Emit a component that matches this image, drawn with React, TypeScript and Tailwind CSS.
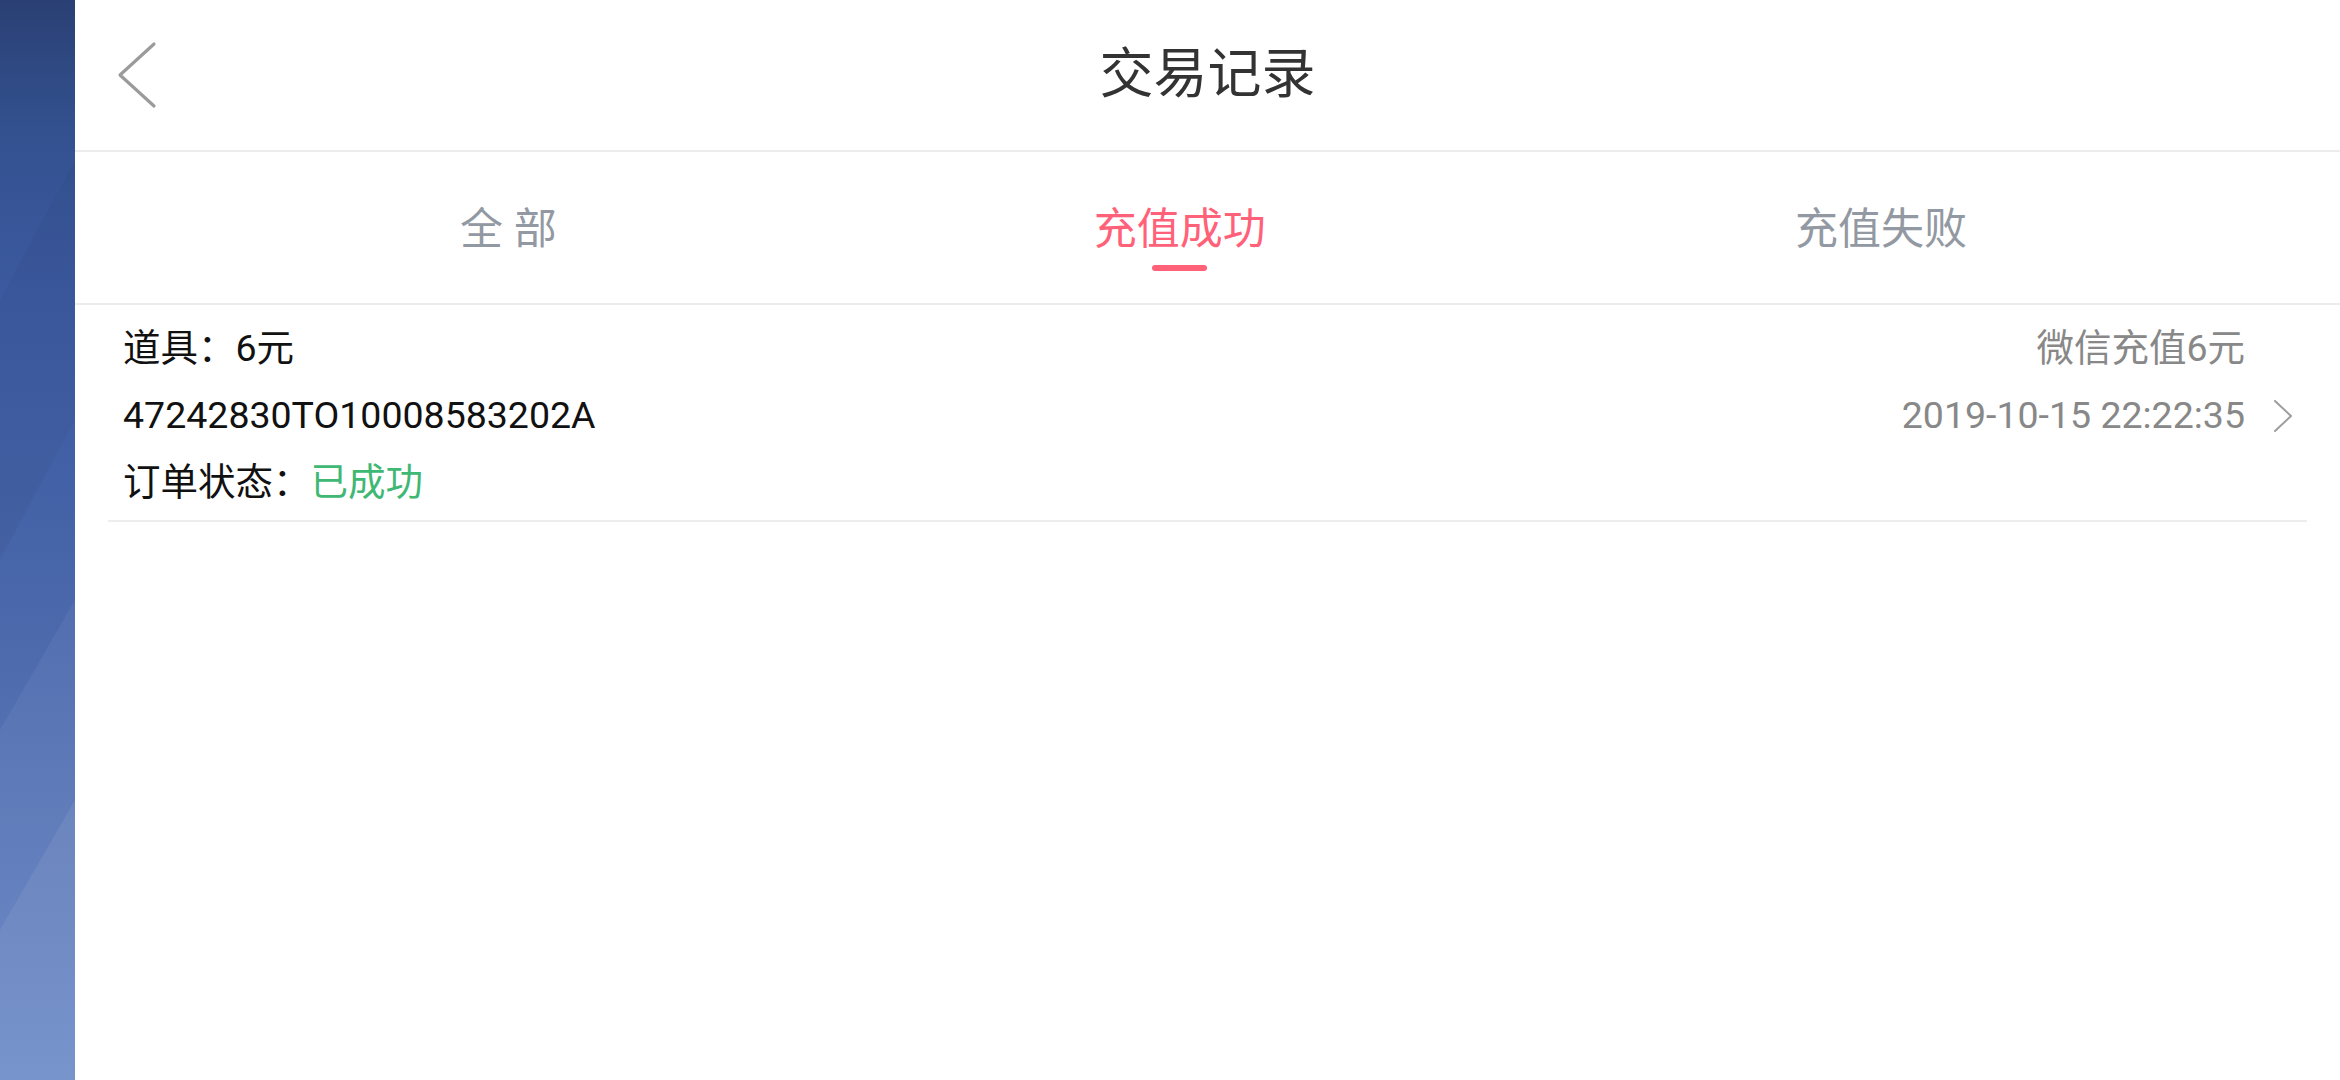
import React from "react";

function BackChevron() {
  return (
    <svg width="40" height="68" viewBox="0 0 40 68" fill="none">
      <path d="M37 3 L3 34 L37 65" stroke="#9b9b9b" strokeWidth="3.2" strokeLinecap="round" strokeLinejoin="round" />
    </svg>
  );
}

function RowChevron() {
  return (
    <svg width="20" height="34" viewBox="0 0 20 34" fill="none">
      <path d="M2 2 L18 17 L2 32" stroke="#9e9e9e" strokeWidth="2" strokeLinecap="round" strokeLinejoin="round" />
    </svg>
  );
}

function SideStrip() {
  return (
    <div className="relative w-[75px] shrink-0 overflow-hidden bg-[linear-gradient(180deg,#2a4074_0%,#33518f_12%,#3e5ba3_30%,#4361a6_45%,#4d6aad_60%,#5a77b8_78%,#6686c6_100%)]">
      <svg className="absolute inset-0" width="75" height="1080" viewBox="0 0 75 1080" preserveAspectRatio="none">
        <polygon points="75,600 75,1080 0,1080 0,730" fill="#ffffff" opacity="0.05" />
        <polygon points="75,800 75,1080 0,1080 0,930" fill="#ffffff" opacity="0.07" />
        <polygon points="75,160 75,420 0,560 0,300" fill="#000000" opacity="0.03" />
      </svg>
    </div>
  );
}

export default function App() {
  return (
    <div className="flex h-[1080px] w-[2340px] overflow-hidden bg-white font-[Roboto,'Noto_Sans_CJK_SC',sans-serif]">
      <SideStrip />
      <div className="flex flex-1 flex-col bg-white">
        {/* Header */}
        <div className="grid h-[152px] grid-cols-[1fr_auto_1fr] items-center border-b-2 border-[#ececec]">
          <div className="flex items-center pl-[42px]">
            <BackChevron />
          </div>
          <div className="text-[54px] leading-[60px] text-[#333333]">交易记录</div>
          <div />
        </div>

        {/* Tabs */}
        <div className="flex h-[153px] items-start justify-between border-b-2 border-[#ececec] pl-[385px] pr-[373px] pt-[52px]">
          <div className="flex flex-col items-center">
            <div className="text-[43px] leading-[50px] text-[#9399a2]">全 部</div>
          </div>
          <div className="ml-[8px] flex flex-col items-center">
            <div className="text-[43px] leading-[50px] text-[#ff6179]">充值成功</div>
            <div className="mt-[11px] h-[6px] w-[55px] rounded-full bg-[#ff6179]" />
          </div>
          <div className="flex flex-col items-center">
            <div className="text-[43px] leading-[50px] text-[#9399a2]">充值失败</div>
          </div>
        </div>

        {/* List */}
        <div className="mx-[33px] flex justify-between border-b-2 border-[#ededed] pb-[4px] pl-[15px] pr-[14px] pt-[10px]">
          <div className="flex flex-col text-[37.5px] leading-[67px] text-[#111111]">
            <div>道具：6元</div>
            <div>47242830TO10008583202A</div>
            <div>
              订单状态：<span className="text-[#3fb874]">已成功</span>
            </div>
          </div>
          <div className="flex flex-col items-end text-[37.5px] leading-[67px] text-[#888888]">
            <div className="mr-[48px]">微信充值6元</div>
            <div className="flex items-center">
              <span>2019-10-15 22:22:35</span>
              <span className="ml-[28px] flex items-center">
                <RowChevron />
              </span>
            </div>
          </div>
        </div>
      </div>
    </div>
  );
}
